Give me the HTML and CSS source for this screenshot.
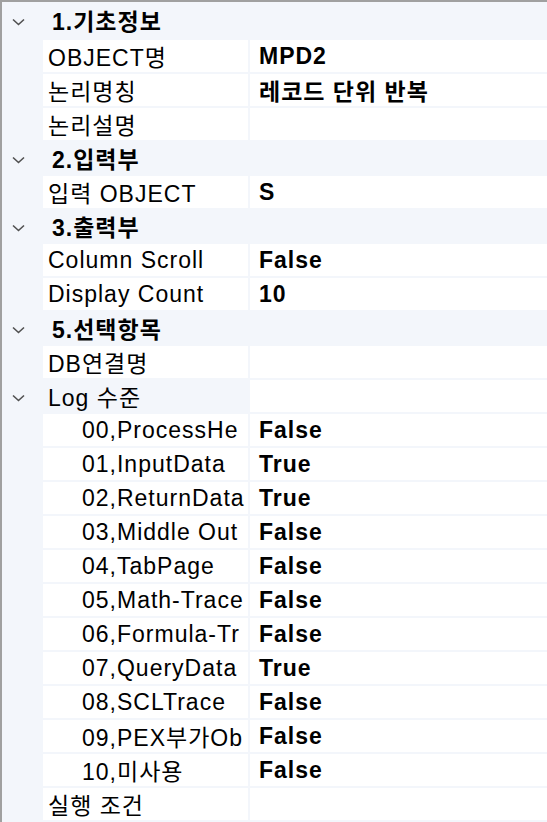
FILE: index.html
```html
<!DOCTYPE html>
<html lang="ko">
<head>
<meta charset="utf-8">
<link rel="stylesheet" href="styles.css">
</head>
<body>
<div class="grid">
  <div class="row cat first"><span class="chev"><svg width="13" height="8" viewBox="0 0 13 8"><polyline points="1,1.5 6.5,6.5 12,1.5" fill="none" stroke="#505050" stroke-width="1.6"/></svg></span><span class="cat-label">1.기초정보</span></div>
  <div class="row prop"><div class="name">OBJECT명</div><div class="val">MPD2</div></div>
  <div class="row prop"><div class="name">논리명칭</div><div class="val">레코드 단위 반복</div></div>
  <div class="row prop"><div class="name">논리설명</div><div class="val"></div></div>
  <div class="row cat"><span class="chev"><svg width="13" height="8" viewBox="0 0 13 8"><polyline points="1,1.5 6.5,6.5 12,1.5" fill="none" stroke="#505050" stroke-width="1.6"/></svg></span><span class="cat-label">2.입력부</span></div>
  <div class="row prop"><div class="name">입력 OBJECT</div><div class="val">S</div></div>
  <div class="row cat"><span class="chev"><svg width="13" height="8" viewBox="0 0 13 8"><polyline points="1,1.5 6.5,6.5 12,1.5" fill="none" stroke="#505050" stroke-width="1.6"/></svg></span><span class="cat-label">3.출력부</span></div>
  <div class="row prop"><div class="name">Column Scroll</div><div class="val">False</div></div>
  <div class="row prop"><div class="name">Display Count</div><div class="val">10</div></div>
  <div class="row cat"><span class="chev"><svg width="13" height="8" viewBox="0 0 13 8"><polyline points="1,1.5 6.5,6.5 12,1.5" fill="none" stroke="#505050" stroke-width="1.6"/></svg></span><span class="cat-label">5.선택항목</span></div>
  <div class="row prop"><div class="name">DB연결명</div><div class="val"></div></div>
  <div class="row prop parent"><span class="chev"><svg width="13" height="8" viewBox="0 0 13 8"><polyline points="1,1.5 6.5,6.5 12,1.5" fill="none" stroke="#505050" stroke-width="1.6"/></svg></span><div class="name">Log 수준</div><div class="val"></div></div>
  <div class="row prop child"><div class="name">00,ProcessHe</div><div class="val">False</div></div>
  <div class="row prop child"><div class="name">01,InputData</div><div class="val">True</div></div>
  <div class="row prop child"><div class="name">02,ReturnData</div><div class="val">True</div></div>
  <div class="row prop child"><div class="name">03,Middle Out</div><div class="val">False</div></div>
  <div class="row prop child"><div class="name">04,TabPage</div><div class="val">False</div></div>
  <div class="row prop child"><div class="name">05,Math-Trace</div><div class="val">False</div></div>
  <div class="row prop child"><div class="name">06,Formula-Tr</div><div class="val">False</div></div>
  <div class="row prop child"><div class="name">07,QueryData</div><div class="val">True</div></div>
  <div class="row prop child"><div class="name">08,SCLTrace</div><div class="val">False</div></div>
  <div class="row prop child"><div class="name">09,PEX부가Ob</div><div class="val">False</div></div>
  <div class="row prop child"><div class="name">10,미사용</div><div class="val">False</div></div>
  <div class="row prop"><div class="name">실행 조건</div><div class="val"></div></div>
</div>
</body>
</html>
```
FILE: styles.css
```css
html, body {
  margin: 0;
  padding: 0;
  background: #f3f6fb;
}
body {
  font-family: "Liberation Sans", "Noto Sans CJK KR", sans-serif;
  font-size: 23px;
  letter-spacing: 1px;
  color: #000;
  width: 547px;
  height: 822px;
  overflow: hidden;
}
.grid {
  border-top: 2px solid #a0a0a0;
  border-left: 2px solid #a0a0a0;
  background: #f3f6fb;
  height: 820px;
}
.row {
  display: flex;
  align-items: stretch;
  height: 32px;
  margin-bottom: 2px;
}
.row.first {
  height: 36px;
}
.cat {
  align-items: center;
  font-weight: bold;
}
.chev {
  width: 41px;
  flex: 0 0 41px;
  display: flex;
  align-items: center;
  padding-left: 10px;
  padding-top: 3px;
  box-sizing: border-box;
}
.chev svg {
  display: block;
}
.cat-label {
  padding-left: 9px;
}
.prop {
  padding-left: 41px;
}
.prop.parent {
  padding-left: 0;
}
.name {
  width: 205px;
  flex: 0 0 205px;
  background: #fff;
  display: flex;
  align-items: center;
  padding-left: 5px;
  box-sizing: border-box;
  white-space: nowrap;
  overflow: hidden;
}
.parent .name {
  background: #f3f6fb;
}
.child .name {
  padding-left: 39px;
}
.val {
  flex: 1;
  margin-left: 2px;
  background: #fff;
  display: flex;
  align-items: center;
  padding-left: 9px;
  font-weight: bold;
  white-space: nowrap;
}
```
